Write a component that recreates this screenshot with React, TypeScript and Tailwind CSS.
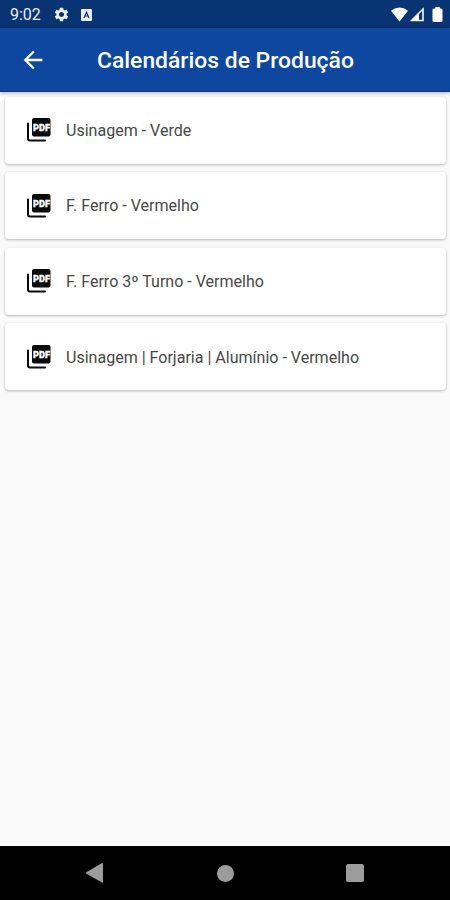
import React from 'react';
import { MdArrowBack, MdSettings } from 'react-icons/md';

const calendars = [
  'Usinagem - Verde',
  'F. Ferro - Vermelho',
  'F. Ferro 3º Turno - Vermelho',
  'Usinagem | Forjaria | Alumínio - Vermelho',
];

function StatusBar() {
  return (
    <div className="flex h-7 shrink-0 items-center bg-[#083474] pt-px pl-[10px] pr-[7px] text-[#e8eefb]">
      <span className="w-[34px] pt-px text-[16px] leading-none whitespace-nowrap">9:02</span>
      <MdSettings className="ml-[9px] size-[17px]" />
      <svg className="ml-[11px] h-3 w-[11px]" viewBox="0 0 11 12">
        <rect width="11" height="12" rx="1" fill="currentColor" />
        <path d="M3 9 5.5 3.2 8 9M4 7h3" fill="none" stroke="#083474" strokeWidth="1.2" />
      </svg>
      <svg className="ml-auto h-[15px] w-[17px]" viewBox="0 0 17 15" fill="white">
        <path d="M0 3.7Q8.5-2.7 17 3.7L8.5 14.5Z" />
      </svg>
      <svg className="ml-0.5 h-[15px] w-[14px]" viewBox="0 0 14 15">
        <path d="M1.5 13.5 13 2V13.5Z" fill="none" stroke="white" strokeWidth="1.5" />
        <path d="M1 14 9 6V14Z" fill="white" />
      </svg>
      <svg className="ml-[8px] h-[15px] w-[11px]" viewBox="0 0 11 15" fill="white">
        <path d="M3.3 0h4.4v1.6H9q1.5 0 1.5 1.5V13.5Q10.5 15 9 15H2Q.5 15 .5 13.5V3.1Q.5 1.6 2 1.6H3.3Z" />
      </svg>
    </div>
  );
}

function PdfStackIcon() {
  return (
    <svg className="size-6 shrink-0" viewBox="0 0 24 24">
      <path d="M1 5.5V20.5Q1 22.500 3 22.500H18" fill="none" stroke="#0a0a0a" strokeWidth="2" strokeLinecap="round" />
      <rect x="5" y="0" width="18.5" height="18.5" rx="2" fill="#0a0a0a" />
      <text x="6" y="13" fontSize="9" fontWeight="900" fill="white" stroke="white" strokeWidth="0.3" textLength="17" lengthAdjust="spacingAndGlyphs">
        PDF
      </text>
    </svg>
  );
}

export default function App() {
  return (
    <div className="flex h-[900px] w-[450px] flex-col overflow-hidden bg-[#fafafa] font-[Roboto,sans-serif]">
      <StatusBar />
      <header className="relative flex h-16 shrink-0 items-center border-b border-[#083c91] bg-[#0d479f] pl-[19px] text-white shadow-[0_1px_4px_rgba(0,0,0,0.3)]">
        <MdArrowBack className="size-[28px] shrink-0" />
        <h1 className="ml-[50px] pt-[3.5px] text-[22.9px] leading-7 font-medium whitespace-nowrap">Calendários de Produção</h1>
      </header>
      <main className="flex grow flex-col gap-[8.6px] pt-[4.5px] pr-1 pl-[5px]">
        {calendars.map((name) => (
          <div
            key={name}
            className="flex h-[67px] items-center rounded-[4px] bg-white pl-[21.5px] shadow-[0_1px_3px_rgba(0,0,0,0.28)]"
          >
            <PdfStackIcon />
            <span className="ml-[15.5px] pt-[1.6px] text-[16.04px] leading-6 whitespace-nowrap text-[#484848]">{name}</span>
          </div>
        ))}
      </main>
      <nav className="flex h-[54px] shrink-0 items-center bg-black pl-[86px] text-[#9c9c9c]">
        <svg className="h-5 w-[17px]" viewBox="0 0 17 20" fill="currentColor">
          <path d="M.4 9.2 16 0Q17 0 17 1V19Q17 20 16 19.5L.4 10.8Q-.2 10 .4 9.2Z" />
        </svg>
        <span className="ml-[114px] size-[17px] rounded-full bg-[#9c9c9c]" />
        <span className="ml-[112px] size-[18px] rounded-[2px] bg-[#9c9c9c]" />
      </nav>
    </div>
  );
}
